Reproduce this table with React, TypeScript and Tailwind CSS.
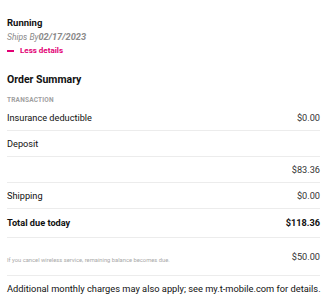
export default function App() {
    const rows = [
        { label: "Insurance deductible", value: "$0.00" },
        { label: "Deposit", value: "" },
        { label: "", value: "$83.36" },
        { label: "Shipping", value: "$0.00" },
    ];

    return (
        <div className="w-[327px] bg-white px-[7px] pt-[16px] text-[#111] font-['Roboto',sans-serif]">
            <div className="text-[9.5px] font-bold leading-[14px]">Running</div>
            <div className="flex items-baseline italic text-[#8a8a8a] leading-[14px]">
                <span className="text-[8.5px]">Ships By</span>
                <span className="text-[9.2px] font-bold">02/17/2023</span>
            </div>
            <div className="mt-[1px] flex items-center gap-[6px] text-[8px] font-bold leading-[12px] text-[#e20074]">
                <span className="h-[1.5px] w-[7px] bg-[#e20074]"></span>
                <span>Less details</span>
            </div>

            <div className="mt-[16px] text-[10.5px] font-bold leading-[14px]">Order Summary</div>
            <div className="mt-[8px] text-[6.5px] font-bold uppercase tracking-[0.2px] leading-[10px] text-[#a0a0a0]">Transaction</div>

            <div className="text-[9.2px]">
                {rows.map((r, i) => (
                    <div key={i} className="flex h-[26px] items-center justify-between border-b-[1.5px] border-[#ececec]">
                        <span>{r.label}</span>
                        <span className="text-[#333]">{r.value}</span>
                    </div>
                ))}
                <div className="flex h-[29px] items-center justify-between border-b-[1.5px] border-[#ececec] font-bold">
                    <span>Total due today</span>
                    <span>$118.36</span>
                </div>
                <div className="flex h-[38px] items-center justify-between border-b-[1.5px] border-[#ececec]">
                    <span className="mt-[8px] text-[5.8px] text-[#a8a8a8]">If you cancel wireless service, remaining balance becomes due.</span>
                    <span className="text-[#333]">$50.00</span>
                </div>
                <div className="flex h-[25px] items-center whitespace-nowrap text-[9.3px]">
                    Additional monthly charges may also apply; see my.t-mobile.com for details.
                </div>
            </div>
        </div>
    );
}
